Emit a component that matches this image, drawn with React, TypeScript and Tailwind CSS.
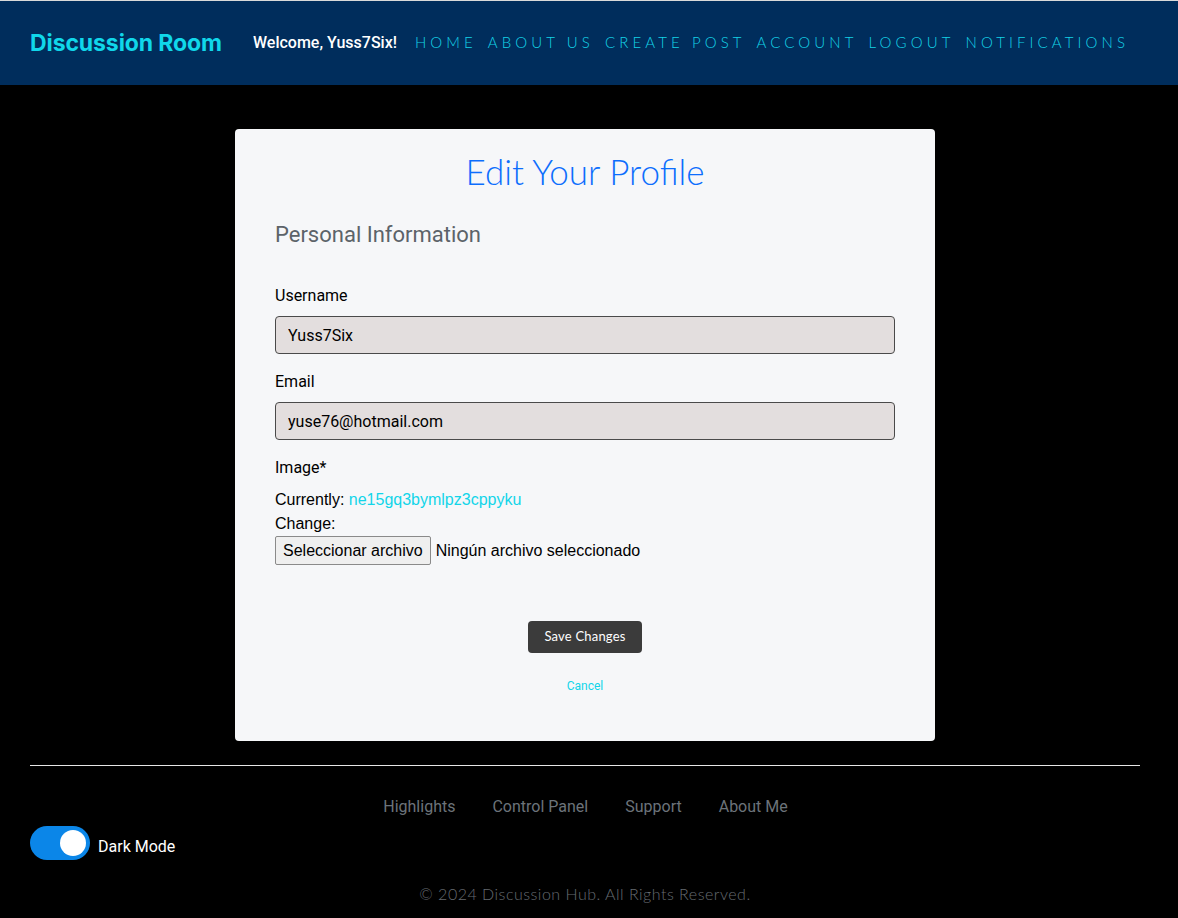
import { useState } from "react";

const navLinks = ["HOME", "ABOUT US", "CREATE POST", "ACCOUNT", "LOGOUT", "NOTIFICATIONS"];
const footerLinks = ["Highlights", "Control Panel", "Support", "About Me"];

function Field({ label, value }: { label: string; value: string }) {
  return (
    <div className="mb-[16px]">
      <label className="mb-[8px] block text-[16px] leading-[24px] text-black">{label}</label>
      <input
        readOnly
        value={value}
        className="block h-[38px] w-full rounded-[4px] border border-[#4a4a4a] bg-[#e3dede] px-[12px] text-[16px] text-black outline-none"
      />
    </div>
  );
}

export default function App() {
  const [dark, setDark] = useState(true);

  return (
    <div className="min-h-[918px] bg-black font-['Roboto','Inter',sans-serif]">
      <header className="flex h-[85px] items-center border-t border-[#d9d9d9] bg-[#002d5c] px-[30px]">
        <a className="font-['Inter',sans-serif] text-[23px] font-bold tracking-[-0.1px] text-[#10d7ea]">
          Discussion Room
        </a>
        <span className="ml-[31px] text-[16px] font-medium text-white">Welcome, Yuss7Six!</span>
        <nav className="ml-[18px] flex items-center gap-[11px] pb-[2px]">
          {navLinks.map((l) => (
            <a key={l} className="font-['Lato',sans-serif] text-[15px] font-light tracking-[4.1px] text-[#14d2e6]">
              {l}
            </a>
          ))}
        </nav>
      </header>

      <div className="w-[1170px]">
        <main className="flex justify-center pt-[44px]">
          <div className="w-[700px] rounded-[4px] bg-[#f6f7f9] px-[40px] pb-[46px] pt-[20px]">
            <h1 className="text-center font-['Lato',sans-serif] text-[35px] font-light leading-[44px] text-[#0d6efd]">
              Edit Your Profile
            </h1>
            <h2 className="mt-[27px] mb-[34px] text-[22px] leading-[30px] text-[#5c6369]">Personal Information</h2>

            <Field label="Username" value="Yuss7Six" />
            <Field label="Email" value="yuse76@hotmail.com" />

            <div className="mt-[16px] font-['Liberation_Sans',Arial,sans-serif] text-[16px] text-black">
              <p className="mb-[8px] font-['Roboto',sans-serif] leading-[24px]">Image*</p>
              <p className="leading-[24px]">
                Currently: <a className="text-[#12d5e9]">ne15gq3bymlpz3cppyku</a>
              </p>
              <p className="leading-[24px]">Change:</p>
              <div className="flex items-center leading-[24px]">
                <button className="h-[29px] rounded-[2px] border border-[#8a8a8a] bg-[#efefef] px-[7px] text-[16px] text-black">
                  Seleccionar archivo
                </button>
                <span className="ml-[5px]">Ningún archivo seleccionado</span>
              </div>
            </div>

            <div className="mt-[56px] flex flex-col items-center">
              <button className="h-[32px] rounded-[4px] bg-[#3b3b3b] px-[16px] font-['Lato',sans-serif] text-[13px] tracking-[0.2px] text-white">
                Save Changes
              </button>
              <a className="mt-[24px] text-[12px] text-[#12d5e9]">Cancel</a>
            </div>
          </div>
        </main>

        <footer className="px-[30px] pt-[24px]">
          <hr className="border-t border-[#e6e6e6]" />
          <ul className="mt-[29px] flex justify-center gap-[37px] pl-[1px]">
            {footerLinks.map((l) => (
              <li key={l} className="text-[16px] leading-[24px] text-[#6c737a]">
                {l}
              </li>
            ))}
          </ul>
          <div className="mt-[7px] flex items-center">
            <button
              onClick={() => setDark(!dark)}
              className="relative h-[34px] w-[60px] rounded-full bg-[#0b86e8]"
            >
              <span className="absolute right-[4px] top-[4px] h-[26px] w-[26px] rounded-full bg-white" />
            </button>
            <span className="ml-[8px] mt-[8px] text-[16px] text-white">Dark Mode</span>
          </div>
          <p className="mt-[22px] text-center font-['Lato',sans-serif] text-[16px] font-light leading-[24px] tracking-[0.5px] text-[#666b71]">
            © 2024 Discussion Hub. All Rights Reserved.
          </p>
        </footer>
      </div>
    </div>
  );
}
